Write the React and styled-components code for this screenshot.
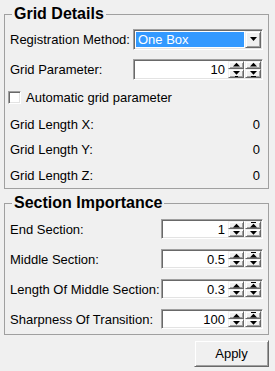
import React from "react";
import styled, { createGlobalStyle } from "styled-components";

const Global = createGlobalStyle`
  html, body { margin: 0; padding: 0; background: #f0f0f0; }
  body {
    font-family: "Liberation Sans", Arial, sans-serif;
    font-size: 13px;
    color: #000;
  }
`;

const Page = styled.div`
  width: 275px;
  height: 371px;
  box-sizing: border-box;
  padding: 5px 6px 3px 4px;
  display: flex;
  flex-direction: column;
`;

const Group = styled.fieldset`
  margin: ${(p) => p.$mt || 0}px 0 0 0;
  padding: ${(p) => p.$pt || 0}px 5px 0 5px;
  border: 1px solid #a0a0a0;
  display: flex;
  flex-direction: column;
  min-width: 0;
`;

const Title = styled.legend`
  font-weight: bold;
  font-size: 16px;
  line-height: 18px;
  padding: 0 2px;
  margin-left: 2px;
`;

const Row = styled.div`
  height: ${(p) => p.$h}px;
  display: flex;
  align-items: center;
  justify-content: space-between;
`;

const Label = styled.span`
  white-space: nowrap;
`;

const Value = styled.span`
  padding-right: 3px;
`;

const Sunken = styled.div`
  box-sizing: border-box;
  width: ${(p) => p.$w}px;
  height: ${(p) => p.$h || 20}px;
  background: #fff;
  border-top: 1px solid #a0a0a0;
  border-left: 1px solid #a0a0a0;
  border-bottom: 1px solid #fff;
  border-right: 1px solid #fff;
  box-shadow: inset 1px 1px 0 #696969, inset -1px -1px 0 #e3e3e3;
  padding: 1px;
  display: flex;
  align-items: stretch;
`;

const Selected = styled.div`
  flex: 1;
  margin: 1px;
  background: #3399ff;
  color: #fff;
  display: flex;
  align-items: center;
  padding-left: 2px;
`;

const Raised = styled.div`
  box-sizing: border-box;
  background: #f0f0f0;
  border-top: 1px solid #f0f0f0;
  border-left: 1px solid #f0f0f0;
  border-bottom: 1px solid #696969;
  border-right: 1px solid #696969;
  box-shadow: inset 1px 1px 0 #fff, inset -1px -1px 0 #a0a0a0;
  display: flex;
  align-items: center;
  justify-content: center;
`;

const DropButton = styled(Raised)`
  width: 16px;
`;

const SpinText = styled.div`
  flex: 1;
  padding-right: 3px;
  display: flex;
  align-items: center;
  justify-content: flex-end;
`;

const SpinCol = styled.div`
  width: 16px;
  display: flex;
  flex-direction: column;
  margin-left: ${(p) => p.$ml || 0}px;
`;

const SpinHalf = styled(Raised)`
  flex: 1;
  min-height: 0;
  overflow: hidden;
`;

const Check = styled.span`
  box-sizing: border-box;
  width: 13px;
  height: 13px;
  background: #fff;
  border-top: 1px solid #a0a0a0;
  border-left: 1px solid #a0a0a0;
  border-bottom: 1px solid #fff;
  border-right: 1px solid #fff;
  box-shadow: inset 1px 1px 0 #696969, inset -1px -1px 0 #e3e3e3;
  margin-right: 5px;
  margin-left: -2px;
`;

const CheckRow = styled(Row)`
  justify-content: flex-start;
`;

const Footer = styled.div`
  display: flex;
  justify-content: flex-end;
  margin-top: 5px;
`;

const Button = styled(Raised)`
  width: 75px;
  height: 27px;
  font-size: 13px;
`;

const Down = () => (
  <svg width="7" height="4" viewBox="0 0 7 4">
    <path d="M0 0H7L3.5 4Z" fill="#000" />
  </svg>
);

const Arrow = ({ dir, bar }) => (
  <svg width="9" height="7" viewBox="0 0 9 7" shapeRendering="crispEdges">
    {dir === "up" ? (
      <>
        <path d="M1 5.5H8L4.5 1.8Z" fill="#000" shapeRendering="auto" />
        {bar && <rect x="2" y="0" width="5" height="1" fill="#000" />}
      </>
    ) : (
      <>
        <path d="M1 1H8L4.5 4.7Z" fill="#000" shapeRendering="auto" />
        <rect x={bar ? 2 : 3} y="6" width={bar ? 5 : 3} height="1" fill="#000" />
      </>
    )}
  </svg>
);

const Combo = ({ w, value }) => (
  <Sunken $w={w} $h={21}>
    <Selected>{value}</Selected>
    <DropButton>
      <Down />
    </DropButton>
  </Sunken>
);

const Spin = ({ w, value, h }) => (
  <Sunken $w={w} $h={h}>
    <SpinText>{value}</SpinText>
    <SpinCol>
      <SpinHalf>
        <Arrow dir="up" />
      </SpinHalf>
      <SpinHalf>
        <Arrow dir="down" />
      </SpinHalf>
    </SpinCol>
    <SpinCol $ml={1}>
      <SpinHalf>
        <Arrow dir="up" bar />
      </SpinHalf>
      <SpinHalf>
        <Arrow dir="down" bar />
      </SpinHalf>
    </SpinCol>
  </Sunken>
);

const sections = [
  ["End Section:", "1"],
  ["Middle Section:", "0.5"],
  ["Length Of Middle Section:", "0.3"],
  ["Sharpness Of Transition:", "100"],
];

export default function App() {
  return (
    <>
      <Global />
      <Page>
        <Group $pt={1}>
          <Title>Grid Details</Title>
          <Row $h={30}>
            <Label>Registration Method:</Label>
            <Combo w={130} value="One Box" />
          </Row>
          <Row $h={30}>
            <Label>Grid Parameter:</Label>
            <Spin w={130} h={21} value="10" />
          </Row>
          <CheckRow $h={27}>
            <Check />
            <Label>Automatic grid parameter</Label>
          </CheckRow>
          <Row $h={26}>
            <Label>Grid Length X:</Label>
            <Value>0</Value>
          </Row>
          <Row $h={25}>
            <Label>Grid Length Y:</Label>
            <Value>0</Value>
          </Row>
          <Row $h={26}>
            <Label>Grid Length Z:</Label>
            <Value>0</Value>
          </Row>
        </Group>
        <Group $mt={5} $pt={2}>
          <Title>Section Importance</Title>
          {sections.map(([l, v]) => (
            <Row key={l} $h={30}>
              <Label>{l}</Label>
              <Spin w={102} h={20} value={v} />
            </Row>
          ))}
        </Group>
        <Footer>
          <Button>Apply</Button>
        </Footer>
      </Page>
    </>
  );
}
